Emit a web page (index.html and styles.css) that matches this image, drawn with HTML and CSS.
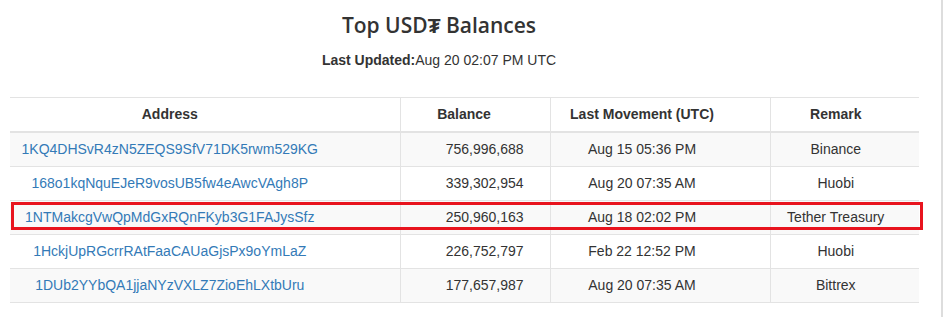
FILE: index.html
```html
<!DOCTYPE html>
<html lang="en">
<head>
  <meta charset="UTF-8">
  <title>Top USD₮ Balances</title>
  <link rel="stylesheet" href="styles.css">
</head>
<body>
  <div class="page">
    <div class="main">
      <div class="header">
        <h2>Top USD₮ Balances</h2>
        <p class="updated"><b>Last Updated:</b>Aug 20 02:07 PM UTC</p>
      </div>
      <div class="table-wrap">
        <table class="balances">
          <colgroup>
            <col class="w-addr">
            <col class="w-bal">
            <col class="w-move">
            <col class="w-remark">
          </colgroup>
          <thead>
            <tr>
              <th class="col-addr">Address</th>
              <th class="col-bal">Balance</th>
              <th class="col-move">Last Movement (UTC)</th>
              <th class="col-remark">Remark</th>
            </tr>
          </thead>
          <tbody>
            <tr>
              <td class="col-addr"><a href="#">1KQ4DHSvR4zN5ZEQS9SfV71DK5rwm529KG</a></td>
              <td class="col-bal num">756,996,688</td>
              <td class="col-move">Aug 15 05:36 PM</td>
              <td class="col-remark">Binance</td>
            </tr>
            <tr>
              <td class="col-addr"><a href="#">168o1kqNquEJeR9vosUB5fw4eAwcVAgh8P</a></td>
              <td class="col-bal num">339,302,954</td>
              <td class="col-move">Aug 20 07:35 AM</td>
              <td class="col-remark">Huobi</td>
            </tr>
            <tr class="marked">
              <td class="col-addr"><a href="#">1NTMakcgVwQpMdGxRQnFKyb3G1FAJysSfz</a></td>
              <td class="col-bal num">250,960,163</td>
              <td class="col-move">Aug 18 02:02 PM</td>
              <td class="col-remark">Tether Treasury</td>
            </tr>
            <tr>
              <td class="col-addr"><a href="#">1HckjUpRGcrrRAtFaaCAUaGjsPx9oYmLaZ</a></td>
              <td class="col-bal num">226,752,797</td>
              <td class="col-move">Feb 22 12:52 PM</td>
              <td class="col-remark">Huobi</td>
            </tr>
            <tr>
              <td class="col-addr"><a href="#">1DUb2YYbQA1jjaNYzVXLZ7ZioEhLXtbUru</a></td>
              <td class="col-bal num">177,657,987</td>
              <td class="col-move">Aug 20 07:35 AM</td>
              <td class="col-remark">Bittrex</td>
            </tr>
          </tbody>
        </table>
        <div class="highlight"></div>
      </div>
    </div>
    <div class="edge"></div>
  </div>
</body>
</html>
```

FILE: styles.css
```css
body { margin: 0; font-family: "Liberation Sans", Arial, sans-serif; font-size: 14px; color: #333; background: #fff; }
.page { display: flex; height: 317px; overflow: hidden; }
.main { width: 941px; padding-left: 10px; box-sizing: border-box; }
.edge { width: 2px; background: #ddd; }

.header { width: 858px; text-align: center; padding-top: 10px; }
.header h2 { margin: 0; font-family: "Open Sans", sans-serif; font-size: 21px; font-weight: 600; line-height: 30px; color: #333; }
.updated { margin: 10px 0 0; line-height: 20px; color: #333; }

.table-wrap { position: relative; margin-top: 27px; width: 909px; }
.balances { width: 909px; border-collapse: collapse; table-layout: fixed; }
.w-addr { width: 390px; }
.w-bal { width: 150px; }
.w-move { width: 220px; }
.w-remark { width: 149px; }
.balances th, .balances td { box-sizing: border-box; padding: 7px 8px; line-height: 19px; border-top: 1px solid #e3e3e3; text-align: center; white-space: nowrap; overflow: hidden; }
.balances th + th, .balances td + td { border-left: 1px solid #e3e3e3; }
.balances thead th { border-bottom: 2px solid #e3e3e3; font-weight: bold; }
.balances tbody tr:nth-child(odd) { background: #f9f9f9; }
.balances tbody tr:last-child td { border-bottom: 1px solid #e3e3e3; }
.balances a { color: #337ab7; text-decoration: none; }

.col-addr { padding-right: 78px !important; }
.col-bal { padding-right: 30px !important; }
.col-bal.num { text-align: right; padding-right: 26px !important; }
.col-move { padding-right: 44px !important; }
.col-remark { padding-right: 26px !important; }

.highlight { position: absolute; left: 1px; top: 105px; width: 906px; height: 22px; border: 3px solid #e8141e; pointer-events: none; }
```
